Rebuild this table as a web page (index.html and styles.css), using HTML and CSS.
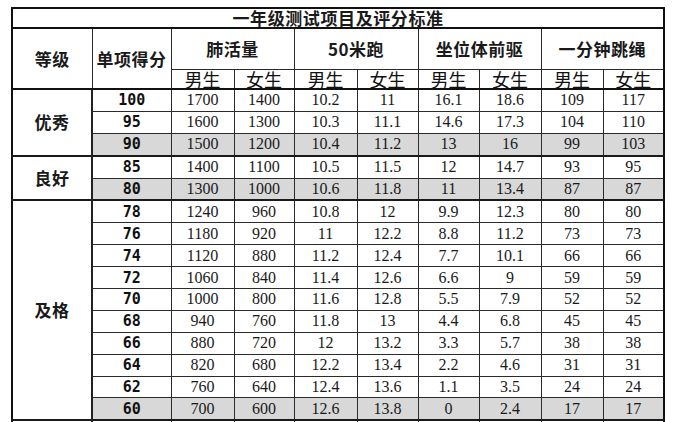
FILE: index.html
```html
<!DOCTYPE html>
<html lang="zh-CN">
<head>
<meta charset="utf-8">
<title>一年级测试项目及评分标准</title>
<link rel="stylesheet" href="styles.css">
</head>
<body>
<div class="sheet">
<table class="score">
<colgroup>
<col class="c-level"><col class="c-score">
<col class="c-a"><col class="c-b"><col class="c-a"><col class="c-c">
<col class="c-c"><col class="c-d"><col class="c-d"><col class="c-c">
</colgroup>
<tr class="r-title"><td colspan="10" class="title">一年级测试项目及评分标准</td></tr>
<tr class="r-head">
<td rowspan="2" class="head">等级</td>
<td rowspan="2" class="head">单项得分</td>
<td colspan="2" class="head">肺活量</td>
<td colspan="2" class="head">50米跑</td>
<td colspan="2" class="head">坐位体前驱</td>
<td colspan="2" class="head">一分钟跳绳</td>
</tr>
<tr class="r-sub">
<td class="sub">男生</td><td class="sub">女生</td>
<td class="sub">男生</td><td class="sub">女生</td>
<td class="sub">男生</td><td class="sub">女生</td>
<td class="sub">男生</td><td class="sub">女生</td>
</tr>
<tr class="row group-start"><td rowspan="3" class="level">优秀</td><td class="pts">100</td><td>1700</td><td>1400</td><td>10.2</td><td>11</td><td>16.1</td><td>18.6</td><td>109</td><td>117</td></tr>
<tr class="row"><td class="pts">95</td><td>1600</td><td>1300</td><td>10.3</td><td>11.1</td><td>14.6</td><td>17.3</td><td>104</td><td>110</td></tr>
<tr class="row shade"><td class="pts">90</td><td>1500</td><td>1200</td><td>10.4</td><td>11.2</td><td>13</td><td>16</td><td>99</td><td>103</td></tr>
<tr class="row group-start"><td rowspan="2" class="level">良好</td><td class="pts">85</td><td>1400</td><td>1100</td><td>10.5</td><td>11.5</td><td>12</td><td>14.7</td><td>93</td><td>95</td></tr>
<tr class="row shade"><td class="pts">80</td><td>1300</td><td>1000</td><td>10.6</td><td>11.8</td><td>11</td><td>13.4</td><td>87</td><td>87</td></tr>
<tr class="row group-start"><td rowspan="10" class="level">及格</td><td class="pts">78</td><td>1240</td><td>960</td><td>10.8</td><td>12</td><td>9.9</td><td>12.3</td><td>80</td><td>80</td></tr>
<tr class="row"><td class="pts">76</td><td>1180</td><td>920</td><td>11</td><td>12.2</td><td>8.8</td><td>11.2</td><td>73</td><td>73</td></tr>
<tr class="row"><td class="pts">74</td><td>1120</td><td>880</td><td>11.2</td><td>12.4</td><td>7.7</td><td>10.1</td><td>66</td><td>66</td></tr>
<tr class="row"><td class="pts">72</td><td>1060</td><td>840</td><td>11.4</td><td>12.6</td><td>6.6</td><td>9</td><td>59</td><td>59</td></tr>
<tr class="row"><td class="pts">70</td><td>1000</td><td>800</td><td>11.6</td><td>12.8</td><td>5.5</td><td>7.9</td><td>52</td><td>52</td></tr>
<tr class="row"><td class="pts">68</td><td>940</td><td>760</td><td>11.8</td><td>13</td><td>4.4</td><td>6.8</td><td>45</td><td>45</td></tr>
<tr class="row"><td class="pts">66</td><td>880</td><td>720</td><td>12</td><td>13.2</td><td>3.3</td><td>5.7</td><td>38</td><td>38</td></tr>
<tr class="row"><td class="pts">64</td><td>820</td><td>680</td><td>12.2</td><td>13.4</td><td>2.2</td><td>4.6</td><td>31</td><td>31</td></tr>
<tr class="row"><td class="pts">62</td><td>760</td><td>640</td><td>12.4</td><td>13.6</td><td>1.1</td><td>3.5</td><td>24</td><td>24</td></tr>
<tr class="row shade"><td class="pts">60</td><td>700</td><td>600</td><td>12.6</td><td>13.8</td><td>0</td><td>2.4</td><td>17</td><td>17</td></tr>
<tr class="row group-start"><td class="level"></td><td class="pts"></td><td></td><td></td><td></td><td></td><td></td><td></td><td></td><td></td></tr>
</table>
</div>
</body>
</html>
```

FILE: styles.css
```css
html, body {
  margin: 0;
  padding: 0;
  background: #ffffff;
  overflow: hidden;
}

.sheet {
  padding: 7px 0 0 11px;
}

.score {
  border-collapse: collapse;
  table-layout: fixed;
  width: 652px;
  border: 2px solid #111111;
  color: #1a1a1a;
  font-family: "Liberation Serif", "Noto Sans CJK SC", serif;
}

.c-level { width: 80px; }
.c-score { width: 79px; }
.c-a { width: 63px; }
.c-b { width: 60px; }
.c-c { width: 61px; }
.c-d { width: 62px; }

.score td {
  border: 1px solid #2b2b2b;
  padding: 0;
  text-align: center;
  vertical-align: middle;
  white-space: nowrap;
  font-size: 16px;
  line-height: 16px;
}

.r-title td { height: 18px; }
.r-head td { height: 40px; }
.r-sub td { height: 18px; }
.row td { height: 20.9px; }

.title {
  font-family: "Noto Sans CJK SC", sans-serif;
  font-weight: 700;
  font-size: 17px !important;
  letter-spacing: 0.6px;
  border-bottom: 2px solid #111111 !important;
}

.head {
  font-family: "Noto Sans CJK SC", sans-serif;
  font-weight: 700;
  font-size: 17px !important;
  letter-spacing: 0.5px;
}

.sub {
  font-family: "Noto Sans CJK SC", sans-serif;
  font-weight: 400;
  font-size: 18px !important;
  color: #111111;
}

.r-sub td,
.r-head td[rowspan] {
  border-bottom: 2px solid #111111;
}

.level {
  font-family: "Noto Sans CJK SC", sans-serif;
  font-weight: 700;
  font-size: 17px !important;
  letter-spacing: 0.5px;
  background: #ffffff;
  border-right: 2px solid #222222 !important;
}

.pts {
  font-family: "DejaVu Sans Mono", monospace;
  font-weight: 700;
  font-size: 15px !important;
  color: #111111;
}

.group-start td {
  border-top: 2px solid #1a1a1a;
}

.shade td:not(.level) {
  background: #d8d8d8;
}
```
